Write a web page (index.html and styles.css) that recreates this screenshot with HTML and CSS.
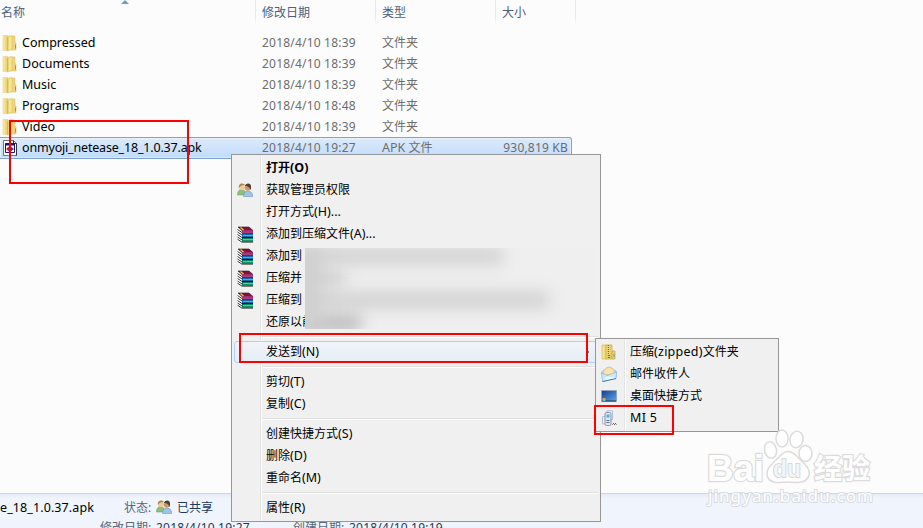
FILE: index.html
```html
<!DOCTYPE html>
<html lang="zh-CN">
<head>
    <meta charset="UTF-8">
    <title>文件管理器</title>
    <link rel="stylesheet" href="styles.css">
</head>
<body>
    <!-- shared icons -->
    <svg class="defs" width="0" height="0">
        <defs>
            <linearGradient id="gold" x1="0" x2="1" y1="0" y2="0">
                <stop offset="0" stop-color="#f8edaa"/>
                <stop offset="1" stop-color="#e6c860"/>
            </linearGradient>
            <linearGradient id="screen" x1="0" x2="1" y1="0" y2="1">
                <stop offset="0" stop-color="#143c8c"/>
                <stop offset="1" stop-color="#5fa8ec"/>
            </linearGradient>
            <symbol id="folder" viewBox="0 0 16 18">
                <path d="M7 2h6v6l1 1v7H7z" fill="#ecd57a" stroke="#dfc265" stroke-width=".6"/>
                <path d="M1 1.500h5v15H1z" fill="url(#gold)" stroke="#e8d48a" stroke-width=".6"/>
                <path d="M6 3l4-1.500v13.500L5.500 17z" fill="#f6e698" stroke="#e0c262" stroke-width=".6"/>
                <path d="M5.800 3.500V16.500" stroke="#cfac4c" stroke-width=".9"/>
                <path d="M13.500 10.500v4" stroke="#48a8dc"/>
            </symbol>
            <symbol id="users" viewBox="0 0 16 16">
                <path d="M.5 13c0-3.500 1.500-5.500 4-5.500s4.500 2 4.500 5.500z" fill="#8fc07a" stroke="#5f9a58" stroke-width=".5"/>
                <circle cx="5" cy="5" r="3" fill="#edcd9e"/>
                <path d="M2 6C.8 1.200 6 .2 8 3 5.500 2.800 3.500 3.500 2 6z" fill="#a88a4c"/>
                <path d="M6.500 14.500c0-3.500 1.500-5.300 4.500-5.300s4.700 1.800 4.700 5.300z" fill="#9cc3e9" stroke="#6588b0" stroke-width=".5"/>
                <circle cx="10.700" cy="5.700" r="3" fill="#ca986a"/>
                <path d="M8 4C8.500.5 14.500.5 14 5c0 1.500-.3 2.500-1 3C13 5 11 4 8 4z" fill="#4a3d31"/>
            </symbol>
            <symbol id="rar" viewBox="0 0 17 17">
                <path d="M0 2l5 4v10.500L0 13.500z" fill="#fff"/>
                <path d="M.5 3.500l4.500 3M.5 6l4.500 3M.5 8.500l4.500 3M.5 11l4.500 3M.5 13.200l4.500 3" stroke="#222" stroke-width=".9"/>
                <path d="M1 1h11l4 3.500H5z" fill="#86103f" stroke="#40061f" stroke-width=".6"/>
                <path d="M5 4.500h11v2.300H5z" fill="#c42480"/>
                <path d="M5 7.300h11" stroke="#111"/>
                <path d="M5 8h11v3H5z" fill="#1267ad"/>
                <path d="M6 9.500h10" stroke="#78c5ec" stroke-width=".7"/>
                <path d="M5 11.500h11" stroke="#111"/>
                <path d="M5 12h11v3.500H5z" fill="#07835d"/>
                <path d="M6 13.700h10" stroke="#5ee0ae"/>
                <path d="M5 16h11" stroke="#111"/>
                <path d="M3.500 1.500l3 2.500" stroke="#e1cb21" stroke-width="1.400"/>
            </symbol>
        </defs>
    </svg>

    <div class="window">
        <header class="columns">
            <div>名称<i class="sort"></i></div>
            <div>修改日期</div>
            <div>类型</div>
            <div>大小</div>
        </header>

        <main class="files">
            <div class="row">
                <div class="name"><svg class="folder"><use href="#folder"/></svg>Compressed</div>
                <div class="date">2018/4/10 18:39</div>
                <div>文件夹</div>
            </div>
            <div class="row">
                <div class="name"><svg class="folder"><use href="#folder"/></svg>Documents</div>
                <div class="date">2018/4/10 18:39</div>
                <div>文件夹</div>
            </div>
            <div class="row">
                <div class="name"><svg class="folder"><use href="#folder"/></svg>Music</div>
                <div class="date">2018/4/10 18:39</div>
                <div>文件夹</div>
            </div>
            <div class="row">
                <div class="name"><svg class="folder"><use href="#folder"/></svg>Programs</div>
                <div class="date">2018/4/10 18:48</div>
                <div>文件夹</div>
            </div>
            <div class="row">
                <div class="name"><svg class="folder"><use href="#folder"/></svg>Video</div>
                <div class="date">2018/4/10 18:39</div>
                <div>文件夹</div>
            </div>
            <div class="row selected">
                <div class="name">
                    <svg class="folder" viewBox="0 0 16 18">
                        <path d="M1.500 1.500h10l3 3v12h-13z" fill="#fff" stroke="#777"/>
                        <path d="M11.500 1.500v3h3v12" fill="none" stroke="#333"/>
                        <path d="M3.500 4.500h9v9h-9z" fill="#fff" stroke="#15157a"/>
                        <path d="M3 5.500h10" stroke="#15157a" stroke-width="2"/>
                        <path d="M4 10l3-2.500v5z" fill="#d02020"/>
                        <path d="M12 10L8.500 7.500v5z" fill="#2336c4"/>
                        <path d="M6 10h4" stroke="#a02060" stroke-width="1.500"/>
                    </svg>
                    onmyoji_netease_18_1.0.37.apk
                </div>
                <div class="date">2018/4/10 19:27</div>
                <div><span class="en">APK</span> 文件</div>
                <div class="size">930,819 KB</div>
            </div>
        </main>

        <footer class="details">
            <div class="line first">
                <span class="filename">e_18_1.0.37.apk</span>
                <span class="label">状态:</span>
                <svg class="users"><use href="#users"/></svg>
                <span>已共享</span>
            </div>
            <div class="line second">
                <span class="label">修改日期:</span>
                <span class="time modified">2018/4/10 19:27</span>
                <span class="label">创建日期:</span>
                <span class="time">2018/4/10 19:19</span>
            </div>
        </footer>
    </div>

    <div class="menu context-menu">
        <div class="item"><span class="icon"></span><b>打开<span class="en">(O)</span></b></div>
        <div class="item"><span class="icon"><svg class="users"><use href="#users"/></svg></span>获取管理员权限</div>
        <div class="item"><span class="icon"></span>打开方式<span class="en">(H)...</span></div>
        <div class="item"><span class="icon"><svg class="rar"><use href="#rar"/></svg></span>添加到压缩文件<span class="en">(A)...</span></div>
        <div class="item"><span class="icon"><svg class="rar"><use href="#rar"/></svg></span>添加到</div>
        <div class="item"><span class="icon"><svg class="rar"><use href="#rar"/></svg></span>压缩并</div>
        <div class="item"><span class="icon"><svg class="rar"><use href="#rar"/></svg></span>压缩到</div>
        <div class="item"><span class="icon"></span>还原以前</div>
        <div class="separator"></div>
        <div class="item hover"><span class="icon"></span>发送到<span class="en">(N)</span><i class="arrow"></i></div>
        <div class="separator"></div>
        <div class="item"><span class="icon"></span>剪切<span class="en">(T)</span></div>
        <div class="item"><span class="icon"></span>复制<span class="en">(C)</span></div>
        <div class="separator"></div>
        <div class="item"><span class="icon"></span>创建快捷方式<span class="en">(S)</span></div>
        <div class="item"><span class="icon"></span>删除<span class="en">(D)</span></div>
        <div class="item"><span class="icon"></span>重命名<span class="en">(M)</span></div>
        <div class="separator"></div>
        <div class="item"><span class="icon"></span>属性<span class="en">(R)</span></div>
        <div class="mosaic"><i class="smear one"></i><i class="smear two"></i><i class="smear three"></i><i class="smear four"></i><i class="smear left"></i></div>
    </div>

    <div class="menu sub-menu">
        <div class="item">
            <span class="icon">
                <svg class="small" viewBox="0 0 16 16">
                    <path d="M1 1h5v14H1z" fill="url(#gold)" stroke="#d8b84f" stroke-width=".7"/>
                    <path d="M5 1h6v14H5z" fill="#f1d980" stroke="#caa53e" stroke-width=".7"/>
                    <path d="M11 7h3v8h-3z" fill="#edd06c" stroke="#caa53e" stroke-width=".7"/>
                    <path d="M8 1v14" stroke="#666" stroke-width="2.500" stroke-dasharray="1 1"/>
                    <path d="M8.500 1v9" stroke="#d0d0d0"/>
                    <path d="M13 10v3" stroke="#48a8dc"/>
                </svg>
            </span>压缩<span class="en zipped">(zipped)</span>文件夹
        </div>
        <div class="item">
            <span class="icon">
                <svg class="small" viewBox="0 0 16 16">
                    <path d="M.5 6L6 1.500q2-1 4 0l5.500 4L15 12 2 15.500z" fill="#a8d5ee" stroke="#8fc0dd" stroke-width=".7"/>
                    <path d="M2.500 5.500q2-4.500 6-4l4.500 2v5H3z" fill="#fbe2b0" stroke="#f0bf6c" stroke-width=".6"/>
                    <path d="M.5 7l6 2.500 9-3.500-.5 6.500L1.500 15.500z" fill="#cfe8f7" stroke="#7db3d6" stroke-width=".6"/>
                    <path d="M1.500 15.500L15 12.500" stroke="#2f83b6"/>
                    <path d="M2 14.500l4.500-4 8 1.500" fill="#eef8fd"/>
                </svg>
            </span>邮件收件人
        </div>
        <div class="item">
            <span class="icon">
                <svg class="small" viewBox="0 0 16 16">
                    <path d="M.5 2.500h15v11H.5z" fill="url(#screen)" stroke="#91a5b9"/>
                    <path d="M1 13h14" stroke="#26384f"/>
                    <circle cx="3" cy="11.500" r="1.700" fill="#e9a13b"/>
                    <circle cx="3.500" cy="12" r="1" fill="#61c4e8"/>
                </svg>
            </span>桌面快捷方式
        </div>
        <div class="item">
            <span class="icon">
                <svg class="small" viewBox="0 0 16 16">
                    <path d="M6 2.500V.8h5.500v9H10" fill="#eef1f9" stroke="#b4bddb"/>
                    <path d="M4 6.500H1.500V14H4" fill="none" stroke="#b6bedb"/>
                    <rect x="4" y="2.500" width="6" height="13" rx="1.500" fill="#e2e6f0" stroke="#8a94b2"/>
                    <path d="M5.500 4.500h3v3h-3z" fill="#43b5e5"/>
                    <path d="M5.500 10.500h3M5.500 12.500h3" stroke="#586580" stroke-width=".9"/>
                    <path d="M11.500 14.500l1-1 1 1 1-1 .8 1" fill="none" stroke="#333"/>
                </svg>
            </span><span class="en mi">MI 5</span>
        </div>
    </div>

    <!-- red marks -->
    <div class="mark mark-file"></div>
    <div class="mark mark-send"></div>
    <div class="mark mark-device"></div>

    <svg class="watermark" viewBox="0 0 180 84" width="180" height="84">
        <g class="logo">
            <text x="3" y="53" font-size="37" textLength="57" lengthAdjust="spacingAndGlyphs">Bai</text>
            <ellipse cx="66.500" cy="22" rx="6" ry="8.300" transform="rotate(-12 66.500 22)"/>
            <ellipse cx="78" cy="10.500" rx="6" ry="8.500"/>
            <ellipse cx="92.500" cy="11.500" rx="6.500" ry="8.300" transform="rotate(12 92.500 11.500)"/>
            <ellipse cx="101.500" cy="25.500" rx="6.500" ry="8"/>
            <path d="M84 23.500c6 0 9 5 14 10 7 6 9 11 6 16-4 7-13 4.500-20 4.500s-16 2.500-20-4c-3-6 0-11 6-16 6-5 8-10.500 14-10.500z"/>
            <text x="69" y="49" font-size="23" textLength="28" class="du">du</text>
            <text x="110" y="51" font-size="28" textLength="56" class="cn">经验</text>
        </g>
        <text x="4" y="74" font-size="17" textLength="165" class="url">jingyan.baidu.com</text>
    </svg>
</body>
</html>
```
FILE: styles.css
```css
* {
    box-sizing: border-box;
}
body {
    margin: 0;
    width: 923px;
    height: 528px;
    overflow: hidden;
    position: relative;
    background-color: #fcfcfc;
    font-family: "Noto Sans", "Noto Sans CJK SC", sans-serif;
    font-size: 12px;
    color: #000;
}
.defs {
    position: absolute;
}
.window {
    height: 528px;
    display: flex;
    flex-direction: column;
}

/* file list */
.columns, .row {
    display: grid;
    grid-template-columns: 256px 120px 120px 80px;
}
.columns {
    height: 25px;
    line-height: 25px;
    color: #4c607a;
}
.columns div {
    position: relative;
    padding-left: 6px;
    border-right: 1px solid;
    border-image: linear-gradient(#dfe9f4, #dfe9f4 60%, #fcfcfc) 1;
}
.columns div:first-child {
    padding-left: 1px;
}
.sort {
    position: absolute;
    left: 121px;
    top: 0;
    border: 4px solid transparent;
    border-top: 0;
    border-bottom-color: #6c9dbf;
}
.files {
    flex: 1;
    padding-top: 7px;
}
.row {
    height: 21px;
    line-height: 22px;
    width: 573px;
    grid-template-columns: 256px 120px 120px 77px;
    color: #6d6d6d;
}
.row > div {
    padding-left: 6px;
    white-space: nowrap;
}
.row .name {
    display: flex;
    align-items: center;
    height: 21px;
    padding-left: 2px;
    font-size: 12.5px;
    color: #000;
}
.folder {
    width: 16px;
    height: 18px;
    margin-right: 4px;
}
.row .date {
    letter-spacing: 0.2px;
}
.row .size {
    text-align: right;
    padding: 0 5px 0 0;
    letter-spacing: 0.2px;
}
.row.selected {
    height: 22px;
    line-height: 20px;
    width: 572px;
    border: 1px solid #7da2ce;
    border-left: 0;
    border-radius: 0 3px 3px 0;
    background: linear-gradient(#dcebfc, #c1dbfc);
    box-shadow: inset 0 0 0 1px rgba(255, 255, 255, 0.4);
}
.row.selected .name {
    height: 20px;
    letter-spacing: -0.18px;
}
.en {
    font-size: 12.5px;
}
.zipped {
    letter-spacing: 0.25px;
}
.mi {
    letter-spacing: 0.3px;
}

/* details pane */
.details {
    height: 35px;
    border-top: 1px solid #cbd7e9;
    background: linear-gradient(#e3ebf7, #f0f4fc 4px);
    color: #1e395b;
    overflow: hidden;
}
.line {
    display: flex;
    align-items: center;
    white-space: nowrap;
}
.first {
    height: 26px;
}
.filename {
    width: 124px;
    font-size: 12.5px;
    letter-spacing: 0.1px;
    color: #000;
}
.label {
    color: #5a6779;
}
.first .label {
    width: 32px;
}
.first .users {
    margin-right: 5px;
}
.second {
    height: 14px;
    padding-left: 100px;
}
.second .label {
    width: 56px;
}
.time {
    letter-spacing: 0.2px;
}
.second .modified {
    width: 137px;
}
.users {
    width: 16px;
    height: 16px;
}

/* menus */
.menu {
    position: absolute;
    border: 1px solid #979797;
    padding: 2px;
    background: linear-gradient(90deg, #f0f0f0 28px, #e2e3e3 28px, #e2e3e3 29px, #fff 29px, #fff 30px, #f0f0f0 30px) padding-box;
}
.context-menu {
    left: 231px;
    top: 154px;
    width: 370px;
    height: 368px;
}
.sub-menu {
    left: 595px;
    top: 338px;
    width: 184px;
    height: 94px;
}
.item {
    height: 22px;
    line-height: 22px;
    display: flex;
    align-items: center;
    white-space: nowrap;
}
.item .icon {
    width: 32px;
    padding-left: 3px;
    display: flex;
    align-items: center;
}
.item.hover {
    border: 1px solid #aecff7;
    border-radius: 3px;
    background: linear-gradient(#f1f4f8, #e5edf7);
}
.item.hover .icon {
    width: 31px;
}
.arrow {
    margin-left: auto;
    margin-right: 8px;
    border: 3px solid transparent;
    border-right: 0;
    border-left-color: #000;
}
.rar {
    width: 17px;
    height: 17px;
}
.small {
    width: 16px;
    height: 16px;
}
.separator {
    height: 2px;
    margin: 3px 0 3px 28px;
    border-top: 1px solid #e0e0e0;
    border-bottom: 1px solid #fff;
}

/* blurred file names */
.mosaic {
    position: absolute;
    left: 73px;
    top: 93px;
    width: 290px;
    height: 81px;
    overflow: hidden;
    background-color: #efefef;
}
.smear {
    position: absolute;
    height: 16px;
    background-color: #d0d0d0;
    filter: blur(8px);
}
.one {
    left: -10px;
    top: 0;
    width: 208px;
}
.two {
    left: -10px;
    top: 22px;
    width: 50px;
}
.three {
    left: -10px;
    top: 44px;
    width: 254px;
}
.four {
    left: -10px;
    top: 67px;
    width: 66px;
    background-color: #b8b8b8;
}
.left {
    left: -12px;
    top: 0;
    width: 30px;
    height: 80px;
}

.mark {
    position: absolute;
    border: 2px solid #f00;
}
.mark-file {
    left: 9px;
    top: 120px;
    width: 180px;
    height: 64px;
}
.mark-send {
    left: 239px;
    top: 333px;
    width: 349px;
    height: 30px;
}
.mark-device {
    left: 594px;
    top: 405px;
    width: 80px;
    height: 30px;
}

.watermark {
    position: absolute;
    left: 704px;
    top: 428px;
    overflow: visible;
}
.logo {
    fill: #fff;
    stroke: #dcdcdc;
    stroke-width: 1.5px;
    font-family: "Liberation Sans", sans-serif;
    font-weight: bold;
}
.watermark text {
    paint-order: stroke;
    stroke-width: 2.5px;
}
.watermark .cn {
    font-family: "Noto Sans CJK SC", sans-serif;
}
.watermark .du {
    fill: #f4f4f4;
    stroke: #cfcfcf;
    stroke-width: 1.5px;
}
.watermark .url {
    fill: #fff;
    stroke: #d8dbe1;
    stroke-width: 2px;
}
```
